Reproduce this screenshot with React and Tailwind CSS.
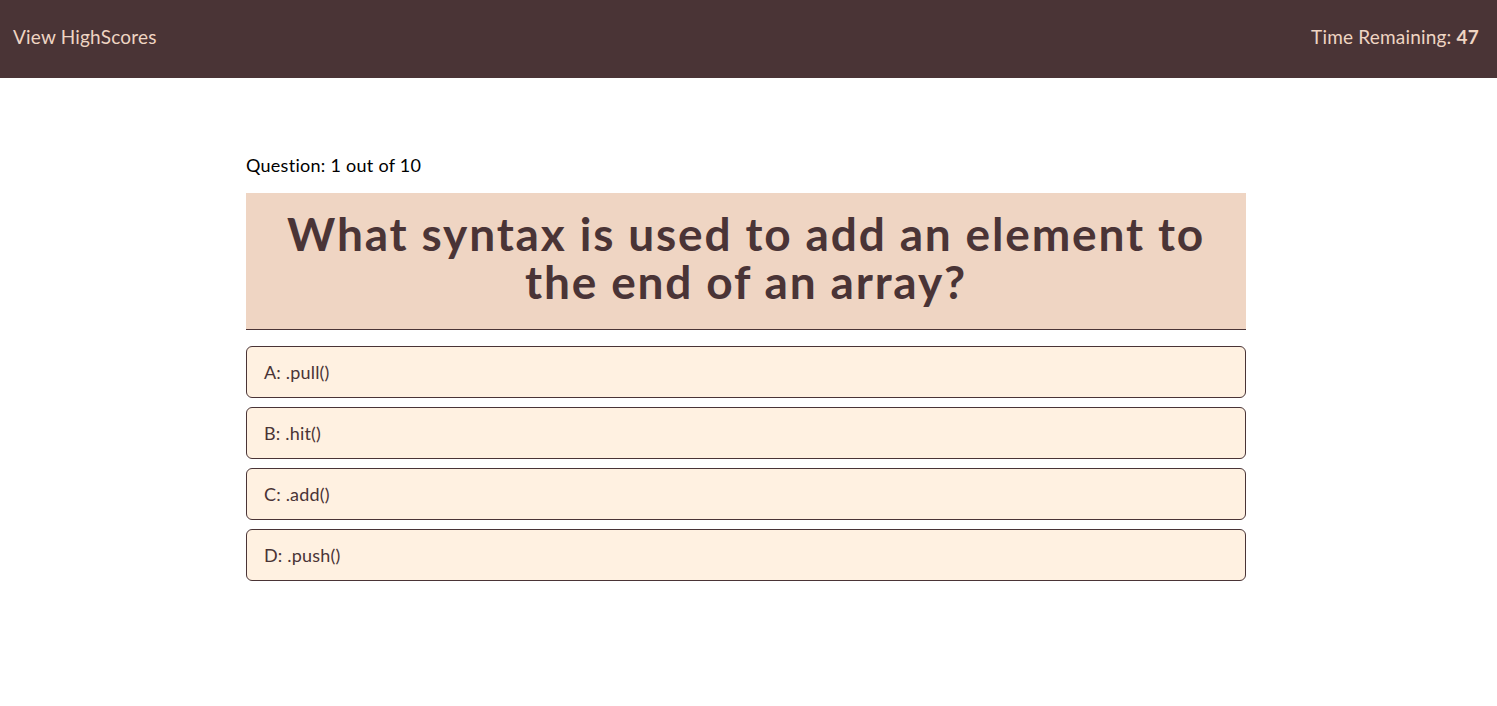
export default function App() {
  const answers = ["A: .pull()", "B: .hit()", "C: .add()", "D: .push()"];

  return (
    <div className="min-h-screen bg-white font-['Lato',sans-serif]">
      <header className="h-[78px] bg-[#4a3436] flex items-center justify-between pl-[13px] pr-[18px] pb-[4px] text-[#efd5c3] text-[19px] tracking-[0.01em]">
        <span>View HighScores</span>
        <span>
          Time Remaining: <span className="font-bold">47</span>
        </span>
      </header>

      <main className="ml-[246px] w-[1000px] pt-[75px]">
        <p className="text-[18px] text-black leading-[24px] tracking-[0.015em]">Question: 1 out of 10</p>

        <div className="mt-[16px] bg-[#efd5c3] border-b border-[#4a3436] h-[137px] flex items-center justify-center px-6 pb-[6px]">
          <h1 className="text-center text-[#4a3436] font-bold text-[46px] leading-[48px] tracking-[0.04em]">
            What syntax is used to add an element to the end of an array?
          </h1>
        </div>

        <div className="mt-[16px] flex flex-col gap-[9px]">
          {answers.map((a) => (
            <button
              key={a}
              className="h-[52px] w-full text-left pl-[17px] bg-[#fff1e1] border border-[#4a3436] rounded-[6px] text-[18px] text-[#4a3436] tracking-[0.01em]"
            >
              {a}
            </button>
          ))}
        </div>
      </main>
    </div>
  );
}
